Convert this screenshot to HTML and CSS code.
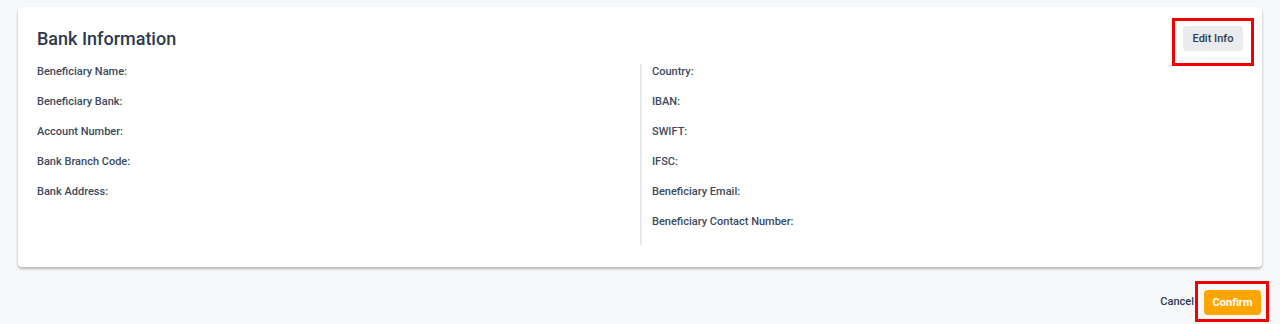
FILE: index.html
```html
<!DOCTYPE html>
<html lang="en">
<head>
    <meta charset="UTF-8">
    <meta name="viewport" content="width=device-width, initial-scale=1.0">
    <title>Bank Information</title>
    <link rel="stylesheet" href="styles.css">
</head>
<body>
    <div class="card">
        <div class="card-header">
            <h2>Bank Information</h2>
            <div class="marked-edit">
                <button class="btn-edit">Edit Info</button>
            </div>
        </div>

        <div class="columns">
            <div class="col">
                <div class="field">Beneficiary Name:</div>
                <div class="field">Beneficiary Bank:</div>
                <div class="field">Account Number:</div>
                <div class="field">Bank Branch Code:</div>
                <div class="field">Bank Address:</div>
            </div>
            <div class="col col-right">
                <div class="field">Country:</div>
                <div class="field">IBAN:</div>
                <div class="field">SWIFT:</div>
                <div class="field">IFSC:</div>
                <div class="field">Beneficiary Email:</div>
                <div class="field">Beneficiary Contact Number:</div>
            </div>
        </div>
    </div>

    <div class="actions">
        <button class="btn-cancel">Cancel</button>
        <div class="marked-confirm">
            <button class="btn-confirm">Confirm</button>
        </div>
    </div>
</body>
</html>
```

FILE: styles.css
```css
body {
    margin: 0;
    background-color: #f7f8fa;
    font-family: Roboto, "Liberation Sans", Arial, sans-serif;
    color: #3a475a;
}
.card {
    background: white;
    margin: 7px 18px 0 18px;
    padding: 19px 19px 22px 19px;
    border-radius: 4px;
    box-shadow: 0 2px 3px rgba(0,0,0,0.28);
}
.card-header {
    display: flex;
    justify-content: space-between;
    align-items: center;
    margin-bottom: 13px;
}
h2 {
    margin: 0;
    font-size: 18px;
    font-weight: 500;
    line-height: 21px;
    color: #2d3a4e;
}
/* red highlight boxes */
.marked-edit {
    position: relative;
}
.marked-edit::after {
    content: "";
    position: absolute;
    left: -11px;
    right: -11px;
    top: -8px;
    bottom: -15px;
    border: 3px solid #f00000;
    pointer-events: none;
}
.marked-confirm {
    border: 3px solid #f00000;
    padding: 6px 5px 4px 6px;
}
button {
    font-family: inherit;
    font-size: 11px;
    font-weight: 500;
    line-height: 13px;
    border: none;
    cursor: pointer;
}
.btn-edit {
    display: block;
    width: 60px;
    height: 25px;
    padding: 0;
    background-color: #e9ebef;
    color: #2d3a4e;
    border-radius: 4px;
}
.columns {
    display: grid;
    grid-template-columns: 1fr 1fr;
}
.col {
    display: flex;
    flex-direction: column;
    gap: 16px;
    padding: 1px 0 16px 0;
}
.col-right {
    border-left: 2px solid #e6e8ec;
    padding-left: 10px;
}
.field {
    font-size: 11px;
    font-weight: 500;
    line-height: 14px;
    color: #3d4a5c;
}
.actions {
    display: flex;
    justify-content: flex-end;
    align-items: center;
    gap: 1px;
    margin: 14px 11px 0 0;
}
.btn-cancel {
    background: none;
    padding: 0;
    color: #2d3a4e;
}
.btn-confirm {
    display: block;
    width: 57px;
    height: 25px;
    padding: 0;
    background-color: #ffa500;
    color: white;
    font-weight: 700;
    border-radius: 4px;
}
```
